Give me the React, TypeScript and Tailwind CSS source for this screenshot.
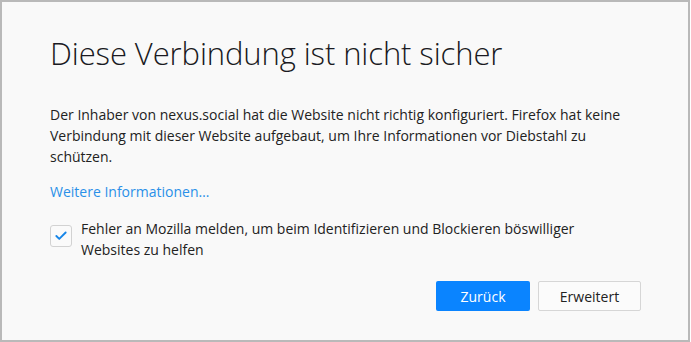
import { Check } from "lucide-react";

export default function App() {
  return (
    <div className="bg-white">
      <div
        className="w-[690px] h-[342px] border-2 border-[#b9b9b9] bg-[#f9f9f9] text-[#222] pl-[48px] pr-[40px]"
        style={{ fontFamily: '"Open Sans", "Noto Sans", sans-serif' }}
      >
        <h1 className="mt-[31px] text-[31px] font-light leading-[40px] text-[#1a1a22] tracking-[-0.1px]">
          Diese Verbindung ist nicht sicher
        </h1>

        <p className="mt-[31px] text-[14px] leading-[21px] max-w-[596px]">
          Der Inhaber von nexus.social hat die Website nicht richtig konfiguriert. Firefox hat keine
          Verbindung mit dieser Website aufgebaut, um Ihre Informationen vor Diebstahl zu schützen.
        </p>

        <a className="block mt-[14px] text-[14px] leading-[21px] text-[#2a90e8] cursor-pointer">
          Weitere Informationen…
        </a>

        <label className="flex gap-[9px] mt-[16px] text-[14px] leading-[21px]">
          <span className="mt-[7px] w-[22px] h-[22px] shrink-0 rounded-[3px] border border-[#d2d2d2] bg-[#fafafa] flex items-center justify-center">
            <Check className="w-[14px] h-[14px] text-[#1585e8]" strokeWidth={3.2} />
          </span>
          <span className="max-w-[540px]">
            Fehler an Mozilla melden, um beim Identifizieren und Blockieren böswilliger Websites zu
            helfen
          </span>
        </label>

        <div className="flex justify-end gap-[8px] mt-[21px] pr-[7px]">
          <button className="w-[94px] h-[30px] rounded-[2px] bg-[#0a84ff] text-white text-[14px]">
            Zurück
          </button>
          <button className="w-[103px] h-[30px] rounded-[2px] bg-[#fbfbfb] border border-[#d6d6d6] text-[#222] text-[14px]">
            Erweitert
          </button>
        </div>
      </div>
    </div>
  );
}
